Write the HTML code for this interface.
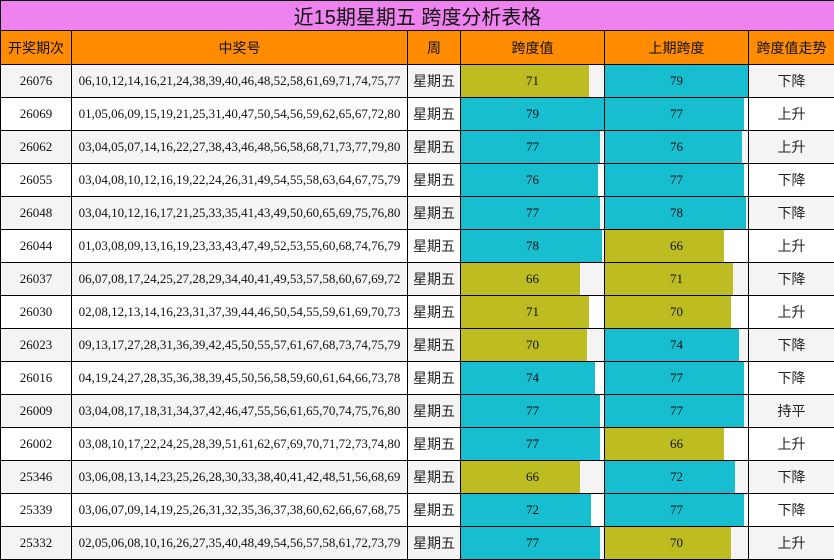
<!DOCTYPE html>
<html><head><meta charset="utf-8"><style>
body{margin:0;background:#fff;}
table{border-collapse:collapse;table-layout:fixed;width:834px;font-family:"Liberation Serif","Noto Sans CJK SC",serif;font-size:13px;color:#111;}
td,th{border:1px solid #000;padding:0;text-align:center;overflow:hidden;white-space:nowrap;}
.t td{background:#ee82ee;height:26px;font-family:"Liberation Sans","Noto Sans CJK SC",sans-serif;font-size:20px;font-weight:normal;}
.h th{background:#ff8c00;height:33px;font-family:"Liberation Sans","Noto Sans CJK SC",sans-serif;font-size:14px;font-weight:normal;}
tr.r td{height:32px;}
tr.r:nth-child(odd) td{background:#f4f4f4;}
tr.r:nth-child(even) td{background:#fff;}
.cn{font-family:"Liberation Sans","Noto Sans CJK SC",sans-serif;font-size:14px;color:#222;}
td.b{position:relative;}
td.b div{position:absolute;left:0;top:0;bottom:0;}
td.b span{position:relative;}
.o{background:#bdbd22;}.c{background:#17becf;}
</style></head><body>
<table>
<colgroup><col style="width:71px"><col style="width:336px"><col style="width:53px"><col style="width:144px"><col style="width:144px"><col style="width:86px"></colgroup>
<tr class="t"><td colspan="6">近15期星期五 跨度分析表格</td></tr>
<tr class="h"><th>开奖期次</th><th>中奖号</th><th>周</th><th>跨度值</th><th>上期跨度</th><th>跨度值走势</th></tr>
<tr class="r"><td>26076</td><td>06,10,12,14,16,21,24,38,39,40,46,48,52,58,61,69,71,74,75,77</td><td class="cn">星期五</td><td class="b"><div class="o" style="width:128px"></div><span>71</span></td><td class="b"><div class="c" style="width:143px"></div><span>79</span></td><td class="cn">下降</td></tr>
<tr class="r"><td>26069</td><td>01,05,06,09,15,19,21,25,31,40,47,50,54,56,59,62,65,67,72,80</td><td class="cn">星期五</td><td class="b"><div class="c" style="width:143px"></div><span>79</span></td><td class="b"><div class="c" style="width:139px"></div><span>77</span></td><td class="cn">上升</td></tr>
<tr class="r"><td>26062</td><td>03,04,05,07,14,16,22,27,38,43,46,48,56,58,68,71,73,77,79,80</td><td class="cn">星期五</td><td class="b"><div class="c" style="width:139px"></div><span>77</span></td><td class="b"><div class="c" style="width:137px"></div><span>76</span></td><td class="cn">上升</td></tr>
<tr class="r"><td>26055</td><td>03,04,08,10,12,16,19,22,24,26,31,49,54,55,58,63,64,67,75,79</td><td class="cn">星期五</td><td class="b"><div class="c" style="width:137px"></div><span>76</span></td><td class="b"><div class="c" style="width:139px"></div><span>77</span></td><td class="cn">下降</td></tr>
<tr class="r"><td>26048</td><td>03,04,10,12,16,17,21,25,33,35,41,43,49,50,60,65,69,75,76,80</td><td class="cn">星期五</td><td class="b"><div class="c" style="width:139px"></div><span>77</span></td><td class="b"><div class="c" style="width:141px"></div><span>78</span></td><td class="cn">下降</td></tr>
<tr class="r"><td>26044</td><td>01,03,08,09,13,16,19,23,33,43,47,49,52,53,55,60,68,74,76,79</td><td class="cn">星期五</td><td class="b"><div class="c" style="width:141px"></div><span>78</span></td><td class="b"><div class="o" style="width:119px"></div><span>66</span></td><td class="cn">上升</td></tr>
<tr class="r"><td>26037</td><td>06,07,08,17,24,25,27,28,29,34,40,41,49,53,57,58,60,67,69,72</td><td class="cn">星期五</td><td class="b"><div class="o" style="width:119px"></div><span>66</span></td><td class="b"><div class="o" style="width:128px"></div><span>71</span></td><td class="cn">下降</td></tr>
<tr class="r"><td>26030</td><td>02,08,12,13,14,16,23,31,37,39,44,46,50,54,55,59,61,69,70,73</td><td class="cn">星期五</td><td class="b"><div class="o" style="width:128px"></div><span>71</span></td><td class="b"><div class="o" style="width:126px"></div><span>70</span></td><td class="cn">上升</td></tr>
<tr class="r"><td>26023</td><td>09,13,17,27,28,31,36,39,42,45,50,55,57,61,67,68,73,74,75,79</td><td class="cn">星期五</td><td class="b"><div class="o" style="width:126px"></div><span>70</span></td><td class="b"><div class="c" style="width:134px"></div><span>74</span></td><td class="cn">下降</td></tr>
<tr class="r"><td>26016</td><td>04,19,24,27,28,35,36,38,39,45,50,56,58,59,60,61,64,66,73,78</td><td class="cn">星期五</td><td class="b"><div class="c" style="width:134px"></div><span>74</span></td><td class="b"><div class="c" style="width:139px"></div><span>77</span></td><td class="cn">下降</td></tr>
<tr class="r"><td>26009</td><td>03,04,08,17,18,31,34,37,42,46,47,55,56,61,65,70,74,75,76,80</td><td class="cn">星期五</td><td class="b"><div class="c" style="width:139px"></div><span>77</span></td><td class="b"><div class="c" style="width:139px"></div><span>77</span></td><td class="cn">持平</td></tr>
<tr class="r"><td>26002</td><td>03,08,10,17,22,24,25,28,39,51,61,62,67,69,70,71,72,73,74,80</td><td class="cn">星期五</td><td class="b"><div class="c" style="width:139px"></div><span>77</span></td><td class="b"><div class="o" style="width:119px"></div><span>66</span></td><td class="cn">上升</td></tr>
<tr class="r"><td>25346</td><td>03,06,08,13,14,23,25,26,28,30,33,38,40,41,42,48,51,56,68,69</td><td class="cn">星期五</td><td class="b"><div class="o" style="width:119px"></div><span>66</span></td><td class="b"><div class="c" style="width:130px"></div><span>72</span></td><td class="cn">下降</td></tr>
<tr class="r"><td>25339</td><td>03,06,07,09,14,19,25,26,31,32,35,36,37,38,60,62,66,67,68,75</td><td class="cn">星期五</td><td class="b"><div class="c" style="width:130px"></div><span>72</span></td><td class="b"><div class="c" style="width:139px"></div><span>77</span></td><td class="cn">下降</td></tr>
<tr class="r"><td>25332</td><td>02,05,06,08,10,16,26,27,35,40,48,49,54,56,57,58,61,72,73,79</td><td class="cn">星期五</td><td class="b"><div class="c" style="width:139px"></div><span>77</span></td><td class="b"><div class="o" style="width:126px"></div><span>70</span></td><td class="cn">上升</td></tr>
</table>
</body></html>
